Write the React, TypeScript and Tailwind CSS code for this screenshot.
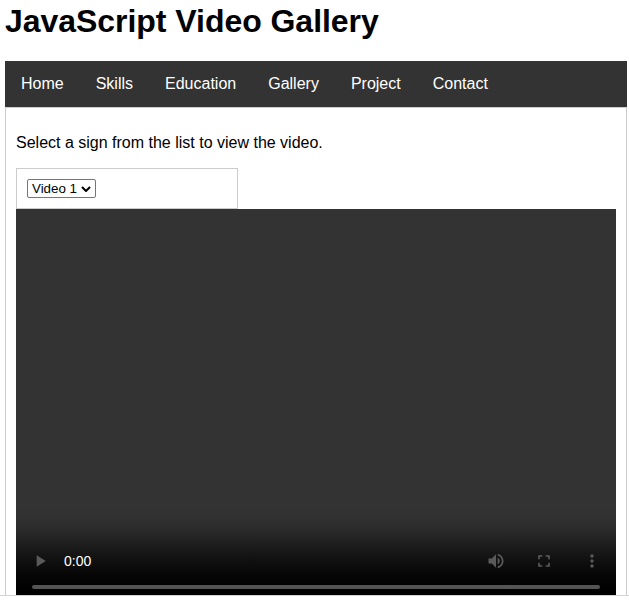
import React from "react";

const links = ["Home", "Skills", "Education", "Gallery", "Project", "Contact"];

function Icon({ d }: { d: string }) {
  return (
    <svg viewBox="0 0 24 24" className="size-5 shrink-0 fill-[#5a5a5a]">
      <path d={d} />
    </svg>
  );
}

function VideoPlayer() {
  return (
    <div className="flex h-[386px] w-[600px] flex-col justify-end bg-[#333333]">
      <div className="flex h-[86px] flex-col justify-end bg-[linear-gradient(to_bottom,#333333_0%,#303030_12%,#292929_26%,#1d1d1d_42%,#101010_60%,#060606_77%,#000000_95%)]">
        <div className="flex h-12 items-center pl-3.5 pr-3.5">
          <Icon d="M8 5v14l11-7z" />
          <span className="ml-3.5 flex-1 text-sm text-white">0:00</span>
          <div className="flex gap-7">
            <Icon d="M3 9v6h4l5 5V4L7 9H3zm13.5 3c0-1.77-1.02-3.29-2.5-4.03v8.05c1.48-.73 2.5-2.25 2.5-4.02zM14 3.23v2.06c2.89.86 5 3.54 5 6.71s-2.11 5.85-5 6.71v2.06c4.01-.91 7-4.49 7-8.77s-2.99-7.86-7-8.77z" />
            <Icon d="M7 14H5v5h5v-2H7v-3zm-2-4h2V7h3V5H5v5zm12 7h-3v2h5v-5h-2v3zM14 5v2h3v3h2V5h-5z" />
            <Icon d="M12 8c1.1 0 2-.9 2-2s-.9-2-2-2-2 .9-2 2 .9 2 2 2zm0 2c-1.1 0-2 .9-2 2s.9 2 2 2 2-.9 2-2-.9-2-2-2zm0 6c-1.1 0-2 .9-2 2s.9 2 2 2 2-.9 2-2-.9-2-2-2z" />
          </div>
        </div>
        <div className="mx-4 mb-1.5 h-1 shrink-0 rounded-full bg-[#545454]" />
      </div>
    </div>
  );
}

export default function App() {
  return (
    <div className="h-[601px] overflow-hidden bg-white font-['Liberation_Sans',Arial,sans-serif] text-black">
      <div className="flex h-[596px] flex-col border-b border-[#d3d3d3] pl-[5px]">
        <h1 className="h-[61px] shrink-0 pt-[3px] text-[32px] font-bold leading-9 tracking-[-0.04px]">JavaScript Video Gallery</h1>
        <nav className="flex h-[46px] w-[622px] shrink-0 items-center bg-[#333333]">
          {links.map((link) => (
            <a key={link} href="#" className="px-4 text-base leading-[18px] text-white">
              {link}
            </a>
          ))}
        </nav>
        <main className="w-[622px] flex-1 border-x border-t border-[#cccccc] px-2.5 pt-[26px]">
          <p className="h-[34px] text-base leading-[18px]">Select a sign from the list to view the video.</p>
          <div className="h-[41px] w-[222px] border border-[#cccccc] p-2.5">
            <button className="flex h-[19px] w-[69px] items-center justify-between rounded-[2px] border border-[#767676] bg-white pl-1 pr-1 text-[13.333px] leading-none">
              <span className="whitespace-nowrap">Video 1</span>
              <svg viewBox="0 0 10 6" className="h-1.5 w-2.5 shrink-0 fill-none stroke-black stroke-2">
                <path d="M1 1l4 4 4-4" />
              </svg>
            </button>
          </div>
          <VideoPlayer />
        </main>
      </div>
    </div>
  );
}
